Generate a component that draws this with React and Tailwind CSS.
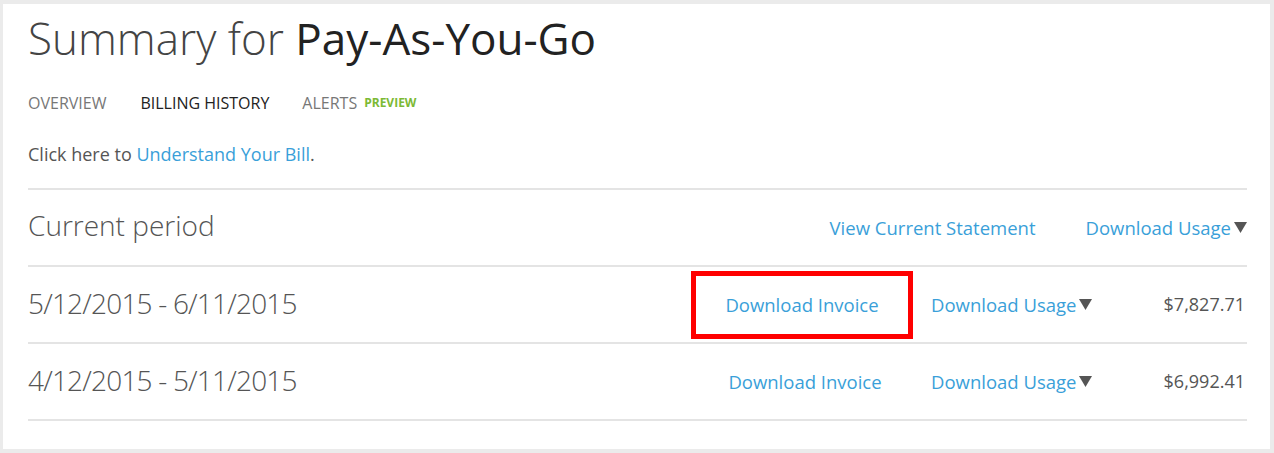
const font = { fontFamily: '"Open Sans", "Noto Sans", "Liberation Sans", sans-serif' };

function Arrow() {
  return (
    <svg className="ml-[3px] inline-block" width="13" height="11" viewBox="0 0 13 11">
      <path d="M0 0 H13 L6.5 11 Z" fill="#555555" />
    </svg>
  );
}

function Link({ children, className = '' }) {
  return <a className={`text-[#3a9fd9] whitespace-nowrap ${className}`}>{children}</a>;
}

const periods = [
  { range: '5/12/2015 - 6/11/2015', amount: '$7,827.71', marked: true },
  { range: '4/12/2015 - 5/11/2015', amount: '$6,992.41', marked: false },
];

export default function App() {
  return (
    <div className="w-[1274px] h-[453px] bg-[#ebebeb] pt-[4px] pl-[3px] pr-[4px] pb-[4px]" style={font}>
      <div className="h-full bg-white pl-[25px] pr-[23px]">
        <h1 className="pt-[6px] h-[64px] leading-[56px] text-[44px] font-light text-[#444] whitespace-nowrap">
          Summary for <span className="font-normal text-[#222]">Pay-As-You-Go</span>
        </h1>

        <nav className="mt-[25px] flex items-center h-[20px] text-[16px] uppercase">
          <span className="text-[#777]">Overview</span>
          <span className="ml-[34px] text-[#222]">Billing History</span>
          <span className="ml-[33px] text-[#777]">Alerts</span>
          <span className="ml-[7px] text-[12px] font-bold text-[#7cb934]">Preview</span>
        </nav>

        <p className="mt-[29px] h-[24px] leading-[24px] text-[18px] text-[#555]">
          Click here to <Link>Understand Your Bill</Link>.
        </p>

        <div className="mt-[22px] text-[18.5px]">
          <div className="h-[77px] border-t-2 border-[#e4e4e4] flex items-center justify-between">
            <span className="pb-[5px] text-[28px] font-light text-[#555]">Current period</span>
            <div className="flex items-center gap-[50px]">
              <Link>View Current Statement</Link>
              <Link className="flex items-center">Download Usage<Arrow /></Link>
            </div>
          </div>

          {periods.map((p) => (
            <div key={p.range} className="h-[77px] border-t-2 border-[#e4e4e4] flex items-center justify-between">
              <span className="pb-[3px] text-[28px] font-light tracking-[-0.8px] text-[#555]">{p.range}</span>
              <div className="flex items-center">
                <div
                  className={`w-[222px] h-[68px] flex items-center justify-center ${
                    p.marked ? 'border-[5px] border-[#ff0000]' : 'pl-[6px]'
                  }`}
                >
                  <Link>Download Invoice</Link>
                </div>
                <Link className="ml-[18px] w-[162px] flex items-center">Download Usage<Arrow /></Link>
                <span className="w-[154px] text-right pr-[2px] text-[18px] text-[#555]">{p.amount}</span>
              </div>
            </div>
          ))}
          <div className="border-t-2 border-[#e4e4e4]" />
        </div>
      </div>
    </div>
  );
}
